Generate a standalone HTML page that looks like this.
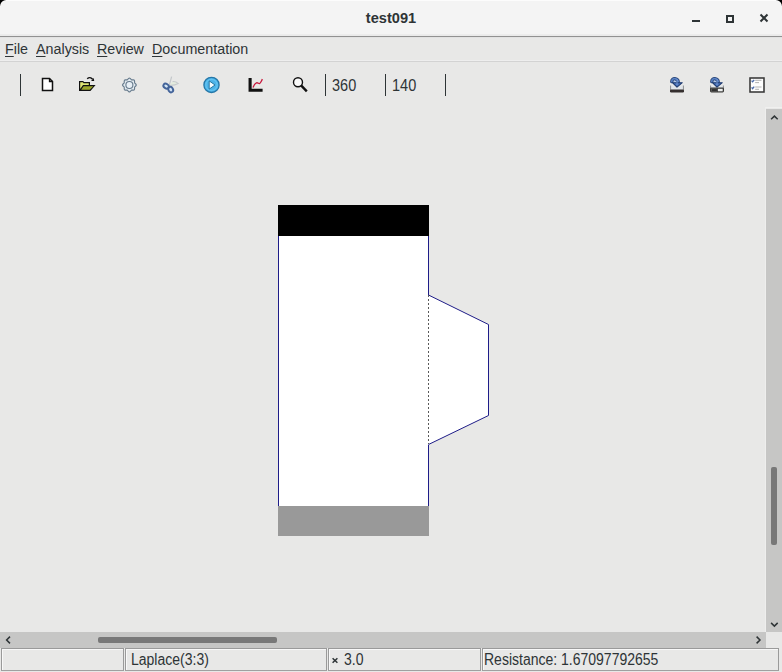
<!DOCTYPE html>
<html><head><meta charset="utf-8">
<style>
*{box-sizing:border-box}
html,body{margin:0;padding:0;width:782px;height:672px;overflow:hidden;background:#e8e8e7;font-family:"Liberation Sans",sans-serif;color:#2e3436}
.a{position:absolute}
#title{left:0;top:0;width:782px;height:34px;background:#f4f4f4}
#title .t{left:0;width:782px;top:9.5px;text-align:center;font-weight:bold;font-size:14.6px;color:#2e3436}
.sep{width:1px;background:#2e3436}
.menu{top:39.5px;font-size:15.3px;color:#2e3436;transform:scaleX(0.935);transform-origin:0 0}
.u{text-decoration:underline;text-underline-offset:2px}
.tb{font-size:15.6px;color:#2e3436;transform:scaleX(0.93);transform-origin:0 0}
.cell{border:1px solid #9a9a9a;border-bottom-color:#a0a0a0;background:#e8e8e7;box-shadow:inset 1px 1px 0 #f8f8f8}
.st{font-size:16px;color:#2e3436;transform:scaleX(0.875);transform-origin:0 0}
</style></head><body>
<!-- title bar -->
<div id="title" class="a"><div class="a" style="left:0;top:0;width:782px;height:1px;background:#fcfcfc"></div>
  <div class="a t">test091</div>
</div>
<div class="a" style="left:0;top:34px;width:782px;height:1px;background:#ececec"></div><div class="a" style="left:0;top:35px;width:782px;height:1px;background:#eaeaea"></div><div class="a" style="left:0;top:37px;width:782px;height:1px;background:#e2e2e2"></div>
<div class="a" style="left:0;top:36px;width:782px;height:1px;background:#919191"></div>
<!-- window corners -->
<div class="a" style="left:0;top:0;width:6px;height:6px;background:radial-gradient(circle at 6px 6px,rgba(0,0,0,0) 5.4px,#000 6.2px)"></div>
<div class="a" style="left:776px;top:0;width:6px;height:6px;background:radial-gradient(circle at 0px 6px,rgba(0,0,0,0) 5.4px,#000 6.2px)"></div>
<!-- window buttons -->
<div class="a" style="left:692px;top:20px;width:8px;height:2px;background:#2e3436"></div>
<div class="a" style="left:726px;top:15px;width:8px;height:8px;border:2px solid #2e3436"></div>
<svg class="a" style="left:759px;top:13px" width="10" height="10" viewBox="0 0 10 10"><path d="M1.5 1.5L8.5 8.5M8.5 1.5L1.5 8.5" stroke="#2e3436" stroke-width="2"/></svg>

<!-- menu bar -->
<div class="a" style="left:0;top:60px;width:782px;height:1px;background:#eeeeee"></div>
<div class="a" style="left:0;top:61px;width:782px;height:1px;background:#d3d3d3"></div>
<div class="a menu" style="left:5px"><span class="u">F</span>ile</div>
<div class="a menu" style="left:36px"><span class="u">A</span>nalysis</div>
<div class="a menu" style="left:97px"><span class="u">R</span>eview</div>
<div class="a menu" style="left:152px"><span class="u">D</span>ocumentation</div>

<!-- toolbar -->
<div class="a sep" style="left:20px;top:74px;height:22px"></div>
<div class="a sep" style="left:325px;top:74px;height:22px"></div>
<div class="a sep" style="left:385px;top:74px;height:22px"></div>
<div class="a sep" style="left:445px;top:74px;height:22px"></div>
<div class="a tb" style="left:332px;top:76.5px">360</div>
<div class="a tb" style="left:392px;top:76.5px">140</div>

<!-- new doc -->
<svg class="a" style="left:38px;top:74px" width="20" height="20" viewBox="0 0 20 20"><path d="M4.5 4.5H11.5L14.5 7.5V16.5H4.5Z" fill="#fff" stroke="#111" stroke-width="1.5" stroke-linejoin="miter"/><path d="M11.5 4.5V7.5H14.5" fill="none" stroke="#111" stroke-width="1.3"/></svg>
<!-- open folder -->
<svg class="a" style="left:76px;top:72px" width="24" height="24" viewBox="0 0 24 24"><path d="M3 9H7.3L7.9 10H14V13H19.6L14.4 18.9H3Z" fill="#111"/><path d="M4.2 10.2H6.9L7.5 11.2H12.8V13H7L4.2 17Z" fill="#e0e676"/><path d="M7.6 14.2H17.3L13.8 17.7H5.2Z" fill="#9ca62b"/><path d="M11.2 6.8Q14 4.2 16.6 7.2" fill="none" stroke="#111" stroke-width="1.4"/><path d="M15.1 8.9H18.2L17.7 6Z" fill="#111"/></svg>
<!-- gear -->
<svg class="a" style="left:117px;top:73px" width="24" height="24" viewBox="0 0 24 24"><path d="M11.65 5.44Q12.40 4.70 13.15 5.44L14.54 6.83L16.51 6.83Q17.56 6.84 17.57 7.89L17.57 9.86L18.96 11.25Q19.70 12.00 18.96 12.75L17.57 14.14L17.57 16.11Q17.56 17.16 16.51 17.17L14.54 17.17L13.15 18.56Q12.40 19.30 11.65 18.56L10.26 17.17L8.29 17.17Q7.24 17.16 7.23 16.11L7.23 14.14L5.84 12.75Q5.10 12.00 5.84 11.25L7.23 9.86L7.23 7.89Q7.24 6.84 8.29 6.83L10.26 6.83Z" fill="#e1e9ef" stroke="#667a8c" stroke-width="1.1" stroke-linejoin="round"/><circle cx="12.4" cy="12" r="3.5" fill="#e6eef5" stroke="#667a8c" stroke-width="1.1"/></svg>
<!-- scissors -->
<svg class="a" style="left:158px;top:73px" width="24" height="24" viewBox="0 0 24 24"><path d="M11.3 12.3L13.6 3.6" stroke="#c2c6ca" stroke-width="1.2" fill="none"/><path d="M11.3 12.3Q16 12.8 20.3 10.6Q17.5 8 14.6 8.6" stroke="#c6cacd" stroke-width="1.1" fill="#e4ecde"/><ellipse cx="8.1" cy="13.1" rx="2.9" ry="2.2" transform="rotate(35 8.1 13.1)" fill="#d2e6f5" stroke="#44649a" stroke-width="1.9"/><ellipse cx="12.7" cy="16.6" rx="2.8" ry="2.3" transform="rotate(60 12.7 16.6)" fill="#d2e2f5" stroke="#44649a" stroke-width="1.9"/></svg>
<!-- play -->
<svg class="a" style="left:199px;top:73px" width="24" height="24" viewBox="0 0 24 24"><circle cx="12.5" cy="11.9" r="7.6" fill="#4db3e8" stroke="#2577a8" stroke-width="1.3"/><circle cx="12.5" cy="11.9" r="5.6" fill="none" stroke="#62c4f2" stroke-width="1.2"/><path d="M10.2 7.9V16.1L16 12Z" fill="#f2fbff" stroke="#1e6e9a" stroke-width=".9" stroke-linejoin="round"/></svg>
<!-- chart -->
<svg class="a" style="left:244px;top:73px" width="24" height="24" viewBox="0 0 24 24"><path d="M6.1 5V17.2H18.6" fill="none" stroke="#111" stroke-width="3.1"/><path d="M9 14.6C10 12 11 10.2 12.5 9.8C14 9.5 14.6 10.8 15.5 10.6C16.6 10.2 17.5 7.8 18.4 6.2" fill="none" stroke="#c8183c" stroke-width="1.35"/></svg>
<!-- magnifier -->
<svg class="a" style="left:290px;top:75px" width="20" height="19" viewBox="0 0 20 19"><circle cx="8" cy="7.2" r="4.5" fill="#fafafa" stroke="#111" stroke-width="1.4"/><path d="M11.1 10.4L16.8 16.3" stroke="#111" stroke-width="2.4" stroke-linecap="butt"/></svg>

<!-- right icons -->
<svg class="a" style="left:666px;top:74px" width="22" height="22" viewBox="0 0 22 22"><path d="M4.6 11.5V17H17.4V11.5" fill="#e2e6ea" stroke="#8a8d90" stroke-width="1"/><rect x="4" y="15.5" width="14" height="3" rx="1.2" fill="#352f2f"/><ellipse cx="8.6" cy="7.4" rx="2.6" ry="2" fill="#b4c8e6"/><path d="M5.8 7.6C5.6 5.1 7.6 4.4 9.6 4.8C11.6 5.2 12.4 7 12.1 9" fill="none" stroke="#1f3b70" stroke-width="3.3" stroke-linecap="round"/><path d="M5.8 7.6C5.6 5.1 7.6 4.4 9.6 4.8C11.6 5.2 12.4 7 12.1 9" fill="none" stroke="#5a82c4" stroke-width="1.7" stroke-linecap="round"/><path d="M6.4 8.7H16.3L11 13.1Z" fill="#4a72b8" stroke="#1f3b70" stroke-width="1.1" stroke-linejoin="round"/><path d="M11 5.5V11" stroke="#7fa0d8" stroke-width=".9"/></svg>
<svg class="a" style="left:706px;top:74px" width="22" height="22" viewBox="0 0 22 22"><path d="M4.6 11.5V17H17.4V11.5" fill="#e2e6ea" stroke="#8a8d90" stroke-width="1"/><rect x="4" y="13.4" width="14" height="5" rx="1.4" fill="#3a3a38"/><rect x="5.6" y="14.9" width="5.6" height="2.3" fill="#2a2a2a" stroke="#6a6a6a" stroke-width=".6"/><rect x="12" y="14.8" width="4.7" height="2.5" fill="#eef0f0"/><ellipse cx="8.6" cy="7.4" rx="2.6" ry="2" fill="#b4c8e6"/><path d="M5.8 7.6C5.6 5.1 7.6 4.4 9.6 4.8C11.6 5.2 12.4 7 12.1 9" fill="none" stroke="#1f3b70" stroke-width="3.3" stroke-linecap="round"/><path d="M5.8 7.6C5.6 5.1 7.6 4.4 9.6 4.8C11.6 5.2 12.4 7 12.1 9" fill="none" stroke="#5a82c4" stroke-width="1.7" stroke-linecap="round"/><path d="M6.4 8.7H16.3L11 13.1Z" fill="#4a72b8" stroke="#1f3b70" stroke-width="1.1" stroke-linejoin="round"/><path d="M11 5.5V11" stroke="#7fa0d8" stroke-width=".9"/></svg>
<svg class="a" style="left:748px;top:76px" width="18" height="18" viewBox="0 0 18 18"><rect x="2" y="2" width="14" height="14" fill="#fdfdfd" stroke="#383838" stroke-width="1.55"/><path d="M3.6 4.6L4.6 5.8L6.2 3.8M3.6 11.4L4.6 12.6L6.2 10.6" fill="none" stroke="#4a6aa8" stroke-width="1.3"/><path d="M7.2 4.3H13.5M7.2 6.6H11M7.2 11H13.5M7.2 13.3H11" stroke="#a8a8a8" stroke-width=".9"/></svg>

<!-- drawing -->
<svg class="a" style="left:0;top:0" width="782" height="672">
  <polygon points="428.5,295 488.5,324.5 488.5,415.5 428.5,444.5" fill="#fff" stroke="#1e1c88" stroke-width="1"/>
  <rect x="278" y="205" width="151" height="31" fill="#000"/>
  <rect x="278" y="236" width="151" height="270" fill="#fff"/>
  <path d="M278.5 236V506M428.5 236V295M428.5 444.5V506" stroke="#1e1c88" stroke-width="1"/>
  <path d="M428.5 295V444" stroke="#5a5a5a" stroke-width="1" stroke-dasharray="2 2"/>
  <rect x="278" y="506" width="151" height="30" fill="#999"/>
</svg>

<!-- scrollbars -->
<div class="a" style="left:765px;top:107px;width:17px;height:1px;background:#f0f0ef"></div><div class="a" style="left:765px;top:107px;width:1px;height:525px;background:#eeeeed"></div><div class="a" style="left:766px;top:109px;width:16px;height:523px;background:#c6c6c5"></div>
<div class="a" style="left:771px;top:467px;width:6px;height:78px;border-radius:2px;background:#787878"></div>
<svg class="a" style="left:768px;top:113px" width="12" height="10" viewBox="0 0 12 10"><path d="M3.1 6.3L6.4 3.1L9.7 6.3" fill="none" stroke="#2e3436" stroke-width="1.5"/></svg>
<svg class="a" style="left:768px;top:618px" width="12" height="10" viewBox="0 0 12 10"><path d="M3.1 4.9L6.4 8.1L9.7 4.9" fill="none" stroke="#2e3436" stroke-width="1.5"/></svg>
<div class="a" style="left:0;top:632px;width:766px;height:16px;background:#c6c6c5"></div>
<div class="a" style="left:98px;top:637px;width:179px;height:6px;border-radius:2px;background:#787878"></div>
<svg class="a" style="left:3px;top:634px" width="10" height="12" viewBox="0 0 10 12"><path d="M7 2.6L3.6 6L7 9.4" fill="none" stroke="#2e3436" stroke-width="1.5"/></svg>
<svg class="a" style="left:753px;top:634px" width="10" height="12" viewBox="0 0 10 12"><path d="M3.6 2.6L7 6L3.6 9.4" fill="none" stroke="#2e3436" stroke-width="1.5"/></svg>

<!-- status bar -->
<div class="a cell" style="left:1px;top:648px;width:123px;height:23px"></div>
<div class="a cell" style="left:125px;top:648px;width:202px;height:23px"></div>
<div class="a cell" style="left:328px;top:648px;width:153px;height:23px"></div>
<div class="a cell" style="left:482px;top:648px;width:297px;height:23px"></div>
<div class="a st" style="left:131px;top:650.6px">Laplace(3:3)</div>
<svg class="a" style="left:331px;top:657px" width="8" height="7" viewBox="0 0 8 7"><path d="M1.6 1.2L6.4 5.8M6.4 1.2L1.6 5.8" stroke="#2e3436" stroke-width="1.5"/></svg><div class="a st" style="left:344px;top:650.6px">3.0</div>
<div class="a st" style="left:483.5px;top:650.6px">Resistance: 1.67097792655</div>
</body></html>
